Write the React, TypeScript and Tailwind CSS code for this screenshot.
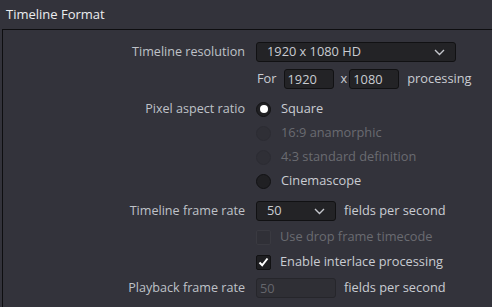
import React from 'react';

const font = { fontFamily: '"Open Sans", "Noto Sans", sans-serif' };

const Chevron = () => (
  <svg width="11" height="7" viewBox="0 0 11 7" className="shrink-0">
    <path d="M1 1 L5.5 5.5 L10 1" fill="none" stroke="#c4c6cc" strokeWidth="1.4" />
  </svg>
);

const Label: React.FC<{ children?: React.ReactNode }> = ({ children }) => (
  <div className="w-[253px] shrink-0 pr-[11px] text-right text-[12.6px] text-[#bfc2c8]">{children}</div>
);

const Radio: React.FC<{ label: string; checked?: boolean; disabled?: boolean }> = ({ label, checked, disabled }) => (
  <div className="flex items-center">
    <div
      className={
        'w-[15px] h-[15px] rounded-full flex items-center justify-center shrink-0 border ' +
        (disabled ? 'border-[#2c2c33] bg-[#2f2f36]' : 'border-[#121214] bg-[#202023]')
      }
    >
      {checked && <div className="w-[8px] h-[8px] rounded-full bg-white" />}
    </div>
    <span className={'ml-[10px] text-[12.8px] ' + (disabled ? 'text-[#6a6b71]' : 'text-[#c9ccd2]')}>{label}</span>
  </div>
);

const Check: React.FC<{ label: string; checked?: boolean; disabled?: boolean }> = ({ label, checked, disabled }) => (
  <div className="flex items-center">
    <div
      className={
        'w-[15px] h-[15px] rounded-[2px] flex items-center justify-center shrink-0 border ' +
        (disabled ? 'border-[#3a3a41] bg-[#303037]' : 'border-[#111113] bg-[#1e1e21]')
      }
    >
      {checked && (
        <svg width="11" height="10" viewBox="0 0 11 10">
          <path d="M1.5 5.5 L4.2 8.3 L9.5 1.5" fill="none" stroke="#ffffff" strokeWidth="2" />
        </svg>
      )}
    </div>
    <span className={'ml-[9px] text-[12.8px] ' + (disabled ? 'text-[#6a6b71]' : 'text-[#c9ccd2]')}>{label}</span>
  </div>
);

export default function App() {
  return (
    <div className="w-[492px] h-[307px] bg-[#33333b] overflow-hidden" style={font}>
      <div className="h-[29px] pl-[6px] pt-[5px] text-[13px] text-[#ecedef]">Timeline Format</div>
      <div className="ml-[2px] h-[278px] border-l border-t border-[#0e0e10] pt-[12px] flex flex-col">
        {/* resolution */}
        <div className="flex items-center h-[20px]">
          <Label>Timeline resolution</Label>
          <div className="w-[200px] h-[20px] rounded-[3px] bg-[#232326] border border-[#111113] flex items-center justify-between pl-[10px] pr-[10px] text-[12.8px] text-[#c9ccd2]">
            <span>1920 x 1080 HD</span>
            <Chevron />
          </div>
        </div>
        <div className="flex items-center h-[20px] mt-[7px]">
          <Label />
          <span className="text-[12.8px] text-[#c9ccd2] ml-[1px]">For</span>
          <div className="ml-[7px] w-[50px] h-[20px] rounded-[3px] bg-[#232326] border border-[#111113] pl-[3px] text-[12.8px] leading-[18px] text-[#c9ccd2]">1920</div>
          <span className="ml-[7px] text-[12.8px] text-[#c9ccd2]">x</span>
          <div className="ml-[2px] w-[50px] h-[20px] rounded-[3px] bg-[#232326] border border-[#111113] pl-[3px] text-[12.8px] leading-[18px] text-[#c9ccd2]">1080</div>
          <span className="ml-[8px] text-[12.8px] text-[#c9ccd2]">processing</span>
        </div>

        {/* pixel aspect */}
        <div className="flex items-center h-[20px] mt-[10px]">
          <Label>Pixel aspect ratio</Label>
          <Radio label="Square" checked />
        </div>
        <div className="flex items-center h-[20px] mt-[4px]">
          <Label />
          <Radio label="16:9 anamorphic" disabled />
        </div>
        <div className="flex items-center h-[20px] mt-[4px]">
          <Label />
          <Radio label="4:3 standard definition" disabled />
        </div>
        <div className="flex items-center h-[20px] mt-[4px]">
          <Label />
          <Radio label="Cinemascope" />
        </div>

        {/* frame rate */}
        <div className="flex items-center h-[20px] mt-[10px]">
          <Label>Timeline frame rate</Label>
          <div className="w-[80px] h-[20px] rounded-[3px] bg-[#232326] border border-[#111113] flex items-center justify-between pl-[10px] pr-[10px] text-[12.8px] text-[#c9ccd2]">
            <span>50</span>
            <Chevron />
          </div>
          <span className="ml-[8px] text-[12.8px] text-[#c9ccd2]">fields per second</span>
        </div>
        <div className="flex items-center h-[20px] mt-[6px]">
          <Label />
          <Check label="Use drop frame timecode" disabled />
        </div>
        <div className="flex items-center h-[20px] mt-[5px]">
          <Label />
          <Check label="Enable interlace processing" checked />
        </div>
        <div className="flex items-center h-[20px] mt-[6px]">
          <Label>Playback frame rate</Label>
          <div className="w-[80px] h-[20px] rounded-[3px] bg-[#2f2f35] border border-[#26262b] pl-[3px] text-[12.8px] leading-[18px] text-[#65666c]">50</div>
          <span className="ml-[8px] text-[12.8px] text-[#c9ccd2]">fields per second</span>
        </div>
      </div>
    </div>
  );
}
